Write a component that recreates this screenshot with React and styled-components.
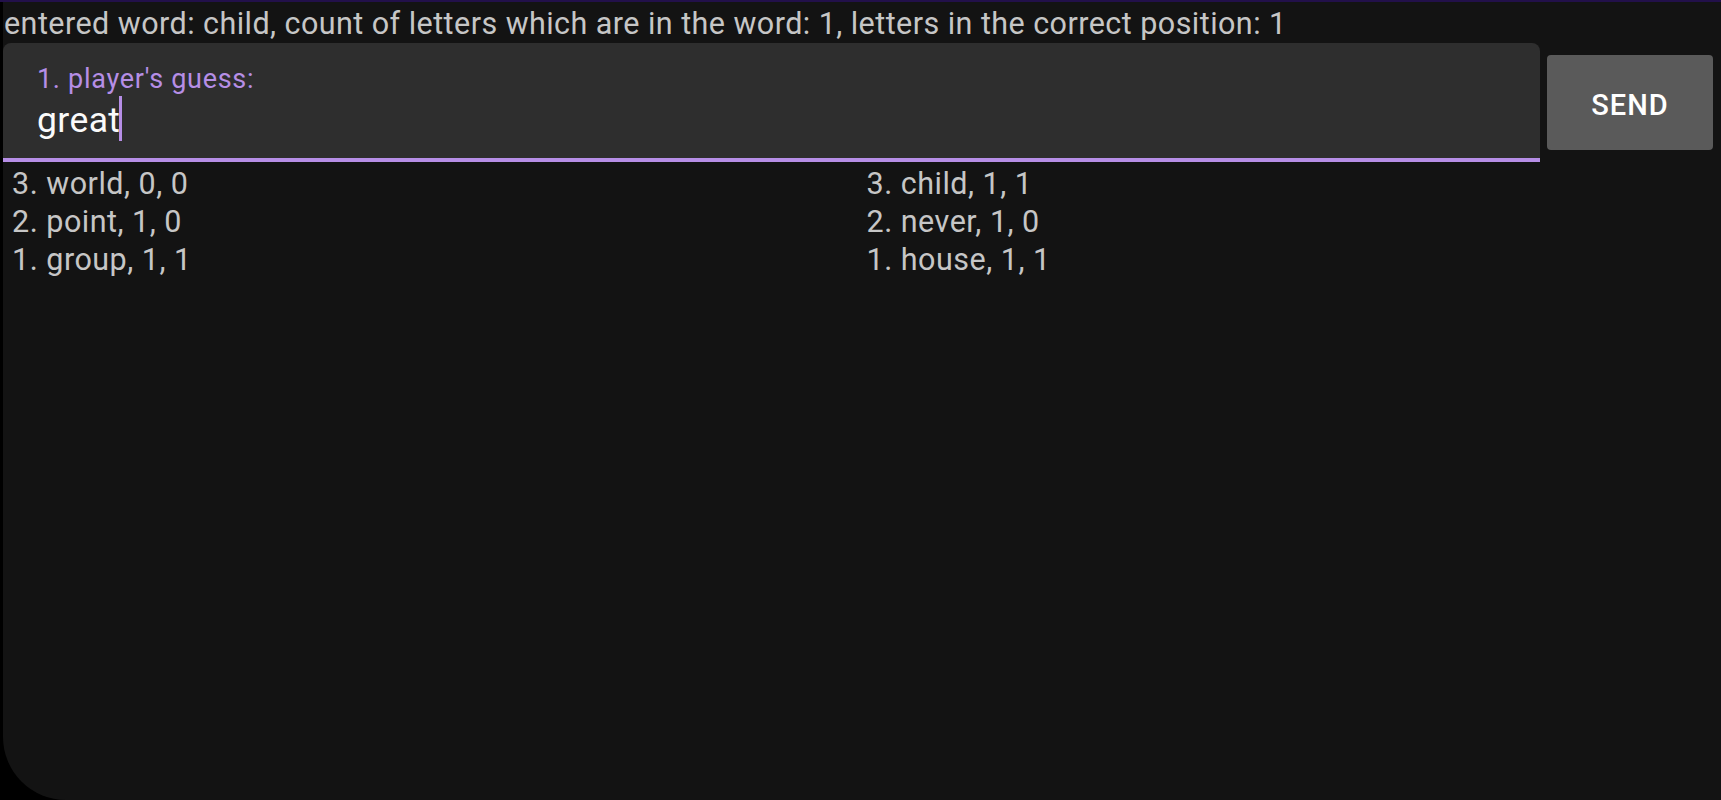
import React from 'react';
import styled, { createGlobalStyle } from 'styled-components';

const Global = createGlobalStyle`
  html, body { margin: 0; padding: 0; background: #000; }
  body { font-family: Roboto, "Noto Sans", sans-serif; }
`;

const Screen = styled.div`
  display: flex;
  flex-direction: column;
  height: 800px;
  background: #000;
`;

const StatusStrip = styled.div`
  height: 2px;
  background: #22104a;
`;

const Panel = styled.div`
  flex: 1;
  margin-left: 3px;
  background: #131313;
  border-bottom-left-radius: 63px;
  display: flex;
  flex-direction: column;
`;

const Info = styled.div`
  padding: 3px 0 0 1px;
  height: 38px;
  font-size: 30.5px;
  line-height: 38px;
  letter-spacing: 0.45px;
  color: #c6c6c6;
  white-space: nowrap;
`;

const InputRow = styled.div`
  display: flex;
  align-items: center;
  gap: 7px;
  padding-right: 8px;
`;

const Field = styled.div`
  flex: 1;
  height: 115px;
  box-sizing: content-box;
  background: #2e2e2e;
  border-bottom: 4px solid #b68ee6;
  border-radius: 8px 8px 0 0;
  padding: 0 0 0 34px;
  display: flex;
  flex-direction: column;
`;

const Label = styled.div`
  margin-top: 21px;
  font-size: 27px;
  line-height: 30px;
  letter-spacing: 0.7px;
  color: #b68ee6;
`;

const Value = styled.div`
  margin-top: 2px;
  font-size: 35.5px;
  line-height: 48px;
  letter-spacing: 0.4px;
  color: #fafafa;
  white-space: nowrap;
`;

const Caret = styled.span`
  display: inline-block;
  width: 3px;
  height: 45px;
  margin-left: -1px;
  vertical-align: -9px;
  background: #b68ee6;
`;

const SendButton = styled.button`
  width: 166px;
  height: 95px;
  border: none;
  border-radius: 4px;
  background: #5a5a5a;
  color: #fff;
  font-family: Roboto, sans-serif;
  font-weight: 500;
  font-size: 29px;
  letter-spacing: 1px;
  padding: 4px 0 0;
`;

const History = styled.div`
  display: grid;
  grid-template-columns: 1fr 1fr;
  padding: 3px 0 0 9px;
`;

const Column = styled.div`
  display: flex;
  flex-direction: column;
`;

const Entry = styled.div`
  font-size: 30.5px;
  line-height: 38px;
  letter-spacing: 0.5px;
  color: #c6c6c6;
  white-space: nowrap;
`;

const player1 = ['3. world, 0, 0', '2. point, 1, 0', '1. group, 1, 1'];
const player2 = ['3. child, 1, 1', '2. never, 1, 0', '1. house, 1, 1'];

const App = () => {
  return (
    <Screen>
      <Global />
      <StatusStrip />
      <Panel>
        <Info>
          entered word: child, count of letters which are in the word: 1, letters in the correct position: 1
        </Info>
        <InputRow>
          <Field>
            <Label>1. player's guess:</Label>
            <Value>
              great<Caret />
            </Value>
          </Field>
          <SendButton>SEND</SendButton>
        </InputRow>
        <History>
          <Column>
            {player1.map((t) => (
              <Entry key={t}>{t}</Entry>
            ))}
          </Column>
          <Column>
            {player2.map((t) => (
              <Entry key={t}>{t}</Entry>
            ))}
          </Column>
        </History>
      </Panel>
    </Screen>
  );
};

export default App;
